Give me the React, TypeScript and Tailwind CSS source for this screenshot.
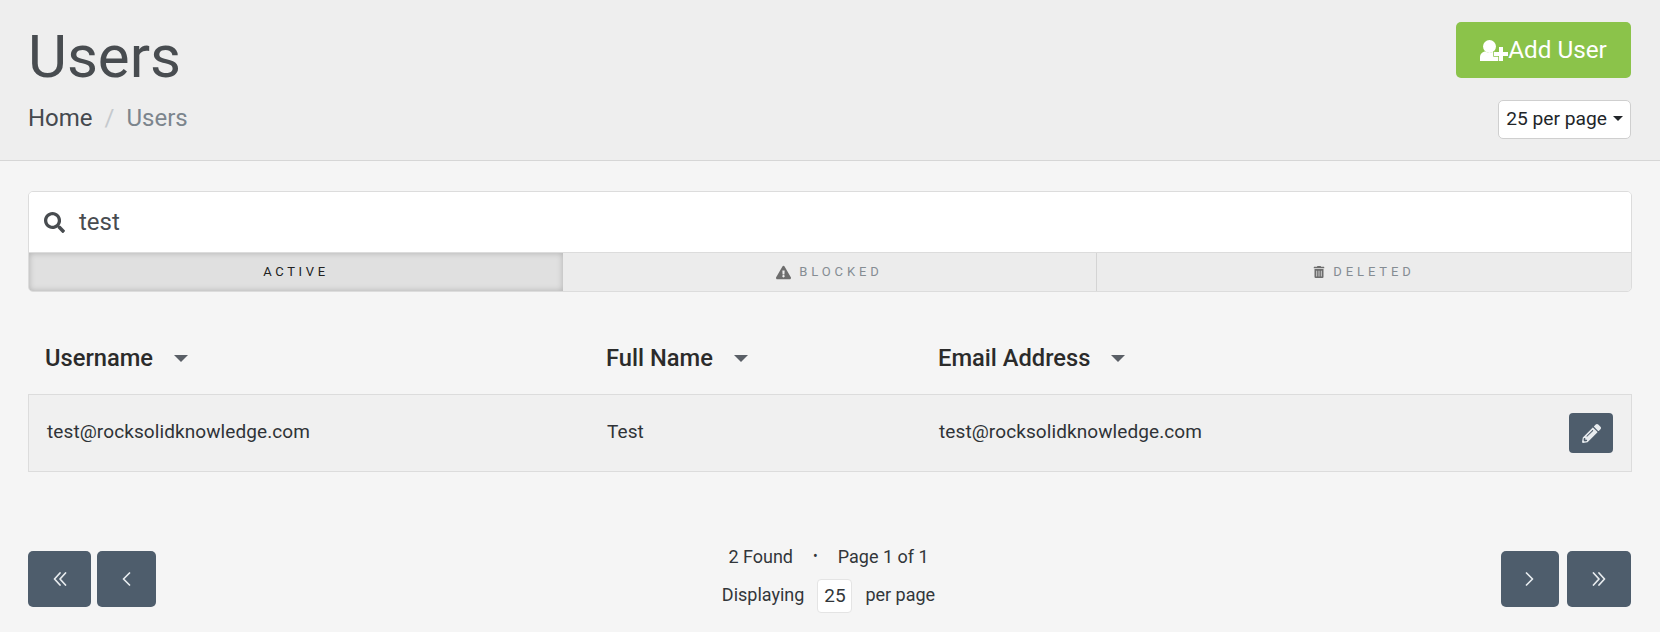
import React from "react";
import { FaSearch, FaExclamationTriangle, FaTrashAlt, FaPencilAlt } from "react-icons/fa";

function Caret() {
  return <span className="ml-[21px] w-0 h-0 border-x-[7px] border-x-transparent border-t-[7px] border-t-[#5a5f66]" />;
}

function UserPlusIcon() {
  return (
    <svg width="28" height="21" viewBox="0 0 28 21" fill="white" className="shrink-0">
      <circle cx="9.5" cy="6.5" r="6.5" />
      <path d="M0 21v-3.5C0 14 2.5 11.5 5.5 11.5c1.2.8 2.6 1.3 4 1.3s2.8-.5 4-1.3c3 0 6 2.5 6 6V21z" />
      <path d="M19 7h4v5h5v4h-5v5h-4v-5h-5v-4h5z" stroke="#8bc34a" strokeWidth="1.5" paintOrder="stroke" />
    </svg>
  );
}

function Chevrons({ points, width }: { points: string[]; width: number }) {
  return (
    <svg width={width} height="14" viewBox={`0 0 ${width} 14`} fill="none" stroke="currentColor" strokeWidth="1.7" strokeLinecap="round" strokeLinejoin="round">
      {points.map((p) => (
        <polyline key={p} points={p} />
      ))}
    </svg>
  );
}

function PageBtn({ w, children }: { w: string; children: React.ReactNode }) {
  return (
    <button className={`${w} h-[56px] rounded-[5px] bg-[#4e5d6c] text-[#e8ecef] flex items-center justify-center`}>
      {children}
    </button>
  );
}

export default function App() {
  return (
    <div className="w-[1660px] h-[632px] overflow-hidden bg-[#f5f5f5] font-['Roboto',sans-serif] text-[#212529]">
      <header className="h-[161px] bg-[#eeeeee] border-b border-[#d6d6d6] pl-[28px] pr-[29px] flex justify-between">
        <div className="pt-[17px]">
          <h1 className="text-[60px] leading-[76px] font-normal text-[#484c50] mt-[2px]">Users</h1>
          <div className="mt-[9px] flex items-center text-[24px] leading-[28px]">
            <span className="text-[#45494e]">Home</span>
            <span className="text-[#c5c9cd] ml-[12px] mr-[12px]">/</span>
            <span className="text-[#7c858d]">Users</span>
          </div>
        </div>
        <div className="flex flex-col items-end pt-[22px]">
          <button className="w-[175px] h-[56px] rounded-[5px] bg-[#8bc34a] text-white text-[24.3px] flex items-center justify-center">
            <UserPlusIcon />
            <span>Add User</span>
          </button>
          <button className="mt-[22px] w-[133px] h-[39px] rounded-[5px] bg-white border border-[#cfcfcf] text-[19.2px] flex items-center justify-center">
            <span>25 per page</span>
            <span className="ml-[6px] mb-[3px] w-0 h-0 border-x-[5px] border-x-transparent border-t-[5px] border-t-[#212529]" />
          </button>
        </div>
      </header>

      <main className="px-[28px] pt-[30px]">
        <div className="w-[1604px] rounded-[5px] border border-[#dcdcdc] overflow-hidden">
          <div className="h-[61px] bg-white flex items-center pl-[15px] text-[#484c50] border-b border-[#dcdcdc]">
            <FaSearch className="text-[21px]" />
            <span className="ml-[14px] text-[24px] font-normal">test</span>
          </div>
          <div className="h-[38px] grid grid-cols-3 bg-[#ececec] text-[13px] uppercase">
            <div className="flex items-center justify-center bg-[#e0e0e0] shadow-[inset_0_0_6px_rgba(0,0,0,0.22)] text-[#222] tracking-[0.28em]">Active</div>
            <div className="flex items-center justify-center gap-[8px] text-[#858c93] border-r border-[#d4d4d4] tracking-[0.3em]">
              <FaExclamationTriangle className="text-[15px] text-[#6d6d6d]" />
              <span>Blocked</span>
            </div>
            <div className="flex items-center justify-center gap-[8px] text-[#858c93] tracking-[0.3em]">
              <FaTrashAlt className="text-[12px] text-[#6d6d6d]" />
              <span>Deleted</span>
            </div>
          </div>
        </div>

        <div className="mt-[34px] w-[1604px]">
          <div className="h-[68px] pb-[2px] grid grid-cols-[561px_332px_1fr] items-center pl-[17px] text-[23.7px] font-medium text-[#2b2b2b]">
            <div className="flex items-center"><span>Username</span><Caret /></div>
            <div className="flex items-center"><span>Full Name</span><Caret /></div>
            <div className="flex items-center"><span>Email Address</span><Caret /></div>
          </div>
          <div className="h-[78px] bg-[#f0f0f0] border border-[#dcdcdc] grid grid-cols-[560px_332px_1fr_auto] items-center pl-[18px] pr-[18px] text-[19px] tracking-[0.005em] text-[#2f3337]">
            <div className="pb-[2px]">test@rocksolidknowledge.com</div>
            <div className="pb-[2px]">Test</div>
            <div className="pb-[2px]">test@rocksolidknowledge.com</div>
            <button className="w-[44px] h-[40px] rounded-[4px] bg-[#4e5d6c] text-[#e8ecef] flex items-center justify-center">
              <FaPencilAlt className="text-[19px]" />
            </button>
          </div>
        </div>

        <div className="mt-[72px] w-[1603px] flex justify-between items-center">
          <div className="flex gap-[6px]">
            <PageBtn w="w-[63px]"><Chevrons width={14} points={["7,1 1.5,7 7,13", "12.5,1 7,7 12.5,13"]} /></PageBtn>
            <PageBtn w="w-[59px]"><Chevrons width={9} points={["7.5,1 1.5,7 7.5,13"]} /></PageBtn>
          </div>
          <div className="flex flex-col items-center text-[18px] text-[#32363a]">
            <div className="flex items-center h-[28px] pb-[4px]">
              <span>2 Found</span>
              <span className="mx-[20px] text-[14px]">•</span>
              <span>Page 1 of 1</span>
            </div>
            <div className="flex items-center h-[36px] mt-[6px]">
              <span className="pb-[3px]">Displaying</span>
              <span className="mx-[13px] w-[35px] h-[34px] bg-white border border-[#e4e4e4] rounded-[4px] flex items-center justify-center text-[19px]">25</span>
              <span className="pb-[3px]">per page</span>
            </div>
          </div>
          <div className="flex gap-[8px]">
            <PageBtn w="w-[58px]"><Chevrons width={9} points={["1.5,1 7.5,7 1.5,13"]} /></PageBtn>
            <PageBtn w="w-[64px]"><Chevrons width={14} points={["1.5,1 7,7 1.5,13", "7,1 12.5,7 7,13"]} /></PageBtn>
          </div>
        </div>
      </main>
    </div>
  );
}
